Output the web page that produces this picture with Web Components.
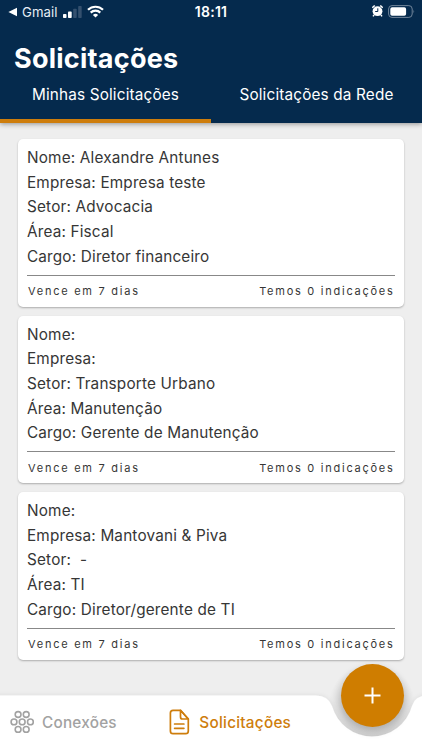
<!DOCTYPE html>
<html lang="pt-BR">
<head>
<meta charset="utf-8">
<title>Solicitações</title>
<style>
html,body{margin:0;height:100%}
body{font-family:Inter,"Liberation Sans",sans-serif;background:#eee;overflow:hidden}
</style>
</head>
<body>
<app-screen></app-screen>
<script>
function define(name, html) {
  const t = document.createElement('template');
  t.innerHTML = html;
  customElements.define(name, class extends HTMLElement {
    constructor() {
      super();
      this.attachShadow({mode: 'open'}).append(t.content.cloneNode(true));
    }
  });
}

define('status-bar', `
<style>
:host{display:grid;grid-template-columns:1fr auto 1fr;align-items:center;height:24px;color:#fff;box-sizing:border-box;padding:0 8px 0 8px}
.l{display:flex;align-items:center}
.r{display:flex;align-items:center;justify-content:flex-end;margin-right:-1px}
.app{font-size:13.2px;line-height:16px;letter-spacing:.05px;margin-left:5px;color:#e8eef5}
.time{font-size:14px;line-height:16px;font-weight:600;letter-spacing:.25px}
svg{display:block}
</style>
<div class="l">
<svg width="9" height="10" viewBox="0 0 9 10"><path d="M9 .8v8.4L.4 5z" fill="#fff"/></svg>
<span class="app">Gmail</span>
<svg style="margin-left:6px" width="19" height="12" viewBox="0 0 19 12"><rect x="0" y="8" width="3.5" height="4" rx=".8" fill="#fff"/><rect x="5" y="5.6" width="3.7" height="6.4" rx=".8" fill="#fff"/><rect x="10.2" y="2.8" width="3.5" height="9.2" rx=".8" fill="#34506e"/><rect x="15.2" y="0" width="3.5" height="12" rx=".8" fill="#34506e"/></svg>
<svg style="margin-left:5px;margin-top:-1px" width="17" height="13" viewBox="0 0 17 13" fill="none" stroke="#fff" stroke-width="2.2"><path d="M1 4.8a10.7 10.7 0 0 1 15 0M3.7 7.6a6.8 6.8 0 0 1 9.6 0"/><path d="M8.5 12.6L5.9 10a3.7 3.7 0 0 1 5.2 0z" fill="#fff" stroke="none"/></svg>
</div>
<span class="time">18:11</span>
<div class="r">
<svg style="margin-top:-2px" width="11" height="12" viewBox="0 0 11 12"><path d="M.3 2.8L2.7.5M10.7 2.8L8.3.5M2.1 10L1 11.4M8.9 10l1.1 1.4" stroke="#fff" stroke-width="1.5"/><circle cx="5.5" cy="6.2" r="4.9" fill="#fff"/><path d="M5.8 3.3v3.2H3.2" fill="none" stroke="#052a4f" stroke-width="1"/></svg>
<svg style="margin-left:5px;margin-top:-2px" width="27" height="13" viewBox="0 0 27 13"><rect x=".6" y=".6" width="23.6" height="11.8" rx="3.4" fill="none" stroke="#71859a"/><rect x="2.3" y="2.2" width="15.8" height="8.6" rx="1.8" fill="#fff"/><path d="M25.5 4.7q1.4 1.8 0 3.6z" fill="#71859a"/></svg>
</div>`);

define('tab-item', `
<style>
:host{display:block;flex:1;box-sizing:border-box;height:46px;padding-top:8px;text-align:center;font-size:15.3px;line-height:20px;font-weight:400;letter-spacing:.17px;color:#fff;border-bottom:4px solid transparent}
:host([active]){border-bottom-color:#ce7d0c}
</style><slot></slot>`);

define('app-header', `
<style>
:host{display:flex;flex-direction:column;height:123px;background:#052a4d;box-shadow:0 1px 5px rgba(0,0,0,.4);position:relative}
h1{margin:17px 0 0 14px;height:36px;font-size:27px;line-height:36px;font-weight:700;letter-spacing:.25px;color:#fff}
nav{display:flex}
</style>
<status-bar></status-bar>
<h1>Solicitações</h1>
<nav><tab-item active>Minhas Solicitações</tab-item><tab-item>Solicitações da Rede</tab-item></nav>`);

define('request-card', `
<style>
:host{display:block;box-sizing:border-box;height:167.5px;padding:7px 9px 0 9px;background:#fff;border-radius:5px;box-shadow:0 1px 2px rgba(0,0,0,.28);color:#363636}
.rows{display:flex;flex-direction:column;font-size:15.3px;line-height:24.7px;letter-spacing:.18px}
footer{display:flex;justify-content:space-between;border-top:1px solid #888;margin-top:5.5px;padding:6.5px 0 0 1px;font-size:11px;line-height:18px;letter-spacing:1.74px}
</style>
<div class="rows"><slot></slot></div>
<footer><slot name="due"></slot><slot name="count"></slot></footer>`);

define('card-row', `<style>:host{display:block;white-space:pre;height:24.7px}</style><slot></slot>`);

define('nav-item', `
<style>
:host{display:flex;align-items:center;color:#a2a2a2;font-size:15.3px;line-height:20px;font-weight:500;letter-spacing:.23px}
:host([active]){color:#ce7d0c;font-weight:550;letter-spacing:.25px}
.label{padding-top:2px}
</style><slot name="icon"></slot><span class="label"><slot></slot></span>`);

define('bottom-nav', `
<style>
:host{display:block;position:absolute;left:0;bottom:0;width:422px;height:94px}
.bg{position:absolute;inset:0}
.items{position:absolute;inset:39px 0 0 0;display:flex;align-items:flex-start;padding:14px 0 0 10px;box-sizing:border-box}
.items nav-item{height:26px}
.fab{position:absolute;left:340.5px;top:8px;width:63px;height:63px;padding:0;border:0;border-radius:50%;background:#cf7d00;box-shadow:0 4px 8px rgba(0,0,0,.2);display:grid;place-items:center}
svg{display:block}
</style>
<svg class="bg" width="422" height="94" viewBox="0 0 422 94"><defs><filter id="s" x="-5%" y="-20%" width="110%" height="140%"><feDropShadow dx="0" dy="-.5" stdDeviation="2.2" flood-color="#000" flood-opacity=".07"/></filter><radialGradient id="g"><stop offset=".65" stop-color="#000" stop-opacity=".1"/><stop offset="1" stop-color="#000" stop-opacity="0"/></radialGradient></defs><circle cx="372" cy="51" r="44" fill="url(#g)"/><path filter="url(#s)" d="M-10 39.5H316Q328 39.5 332 50A41.5 41.5 0 0 0 412 50Q415 39.5 427 39.5H440V110H-10z" fill="#fff"/></svg>
<div class="items">
<nav-item><svg slot="icon" style="margin-right:8px" width="24" height="24" viewBox="0 0 24 24" fill="none" stroke="#a2a2a2" stroke-width="1.6"><circle cx="8.1" cy="4.5" r="2.9"/><circle cx="16.2" cy="4.5" r="2.9"/><circle cx="4" cy="11.9" r="2.9"/><circle cx="12.2" cy="11.9" r="2.9"/><circle cx="20.4" cy="11.9" r="2.9"/><circle cx="8.1" cy="19.4" r="2.9"/><circle cx="16.2" cy="19.4" r="2.9"/></svg>Conexões</nav-item>
<nav-item active style="margin-left:52.5px"><svg slot="icon" style="margin-right:9px" width="21" height="26" viewBox="0 0 21 26" fill="none" stroke="#ce7d0c" stroke-width="1.7" stroke-linejoin="round" stroke-linecap="round"><path d="M11.5 1.3H4Q1.4 1.3 1.4 4V22Q1.4 24.7 4 24.7H16.7Q19.3 24.7 19.3 22V10z"/><path d="M11.5 1.3L19.3 10H13.5Q11.5 10 11.5 8z"/><path d="M5.6 15H14.9M5.6 19.3H14.9"/></svg>Solicitações</nav-item>
</div>
<button class="fab" aria-label="+"><svg width="17" height="17" viewBox="0 0 17 17"><path d="M8.5.5v16M.5 8.5h16" stroke="#fff" stroke-width="2"/></svg></button>`);

define('app-screen', `
<style>
:host{display:flex;flex-direction:column;position:relative;width:422px;height:750px;background:#eee;overflow:hidden}
main{display:flex;flex-direction:column;gap:9px;padding:16px 18.5px 0 18px}
</style>
<app-header></app-header>
<main>
<request-card><card-row>Nome: Alexandre Antunes</card-row><card-row>Empresa: Empresa teste</card-row><card-row>Setor: Advocacia</card-row><card-row>Área: Fiscal</card-row><card-row>Cargo: Diretor financeiro</card-row><span slot="due">Vence em 7 dias</span><span slot="count">Temos 0 indicações</span></request-card>
<request-card><card-row>Nome:</card-row><card-row>Empresa:</card-row><card-row>Setor: Transporte Urbano</card-row><card-row>Área: Manutenção</card-row><card-row>Cargo: Gerente de Manutenção</card-row><span slot="due">Vence em 7 dias</span><span slot="count">Temos 0 indicações</span></request-card>
<request-card><card-row>Nome:</card-row><card-row>Empresa: Mantovani &amp; Piva</card-row><card-row>Setor:  -</card-row><card-row>Área: TI</card-row><card-row>Cargo: Diretor/gerente de TI</card-row><span slot="due">Vence em 7 dias</span><span slot="count">Temos 0 indicações</span></request-card>
</main>
<bottom-nav></bottom-nav>`);
</script>
</body>
</html>
